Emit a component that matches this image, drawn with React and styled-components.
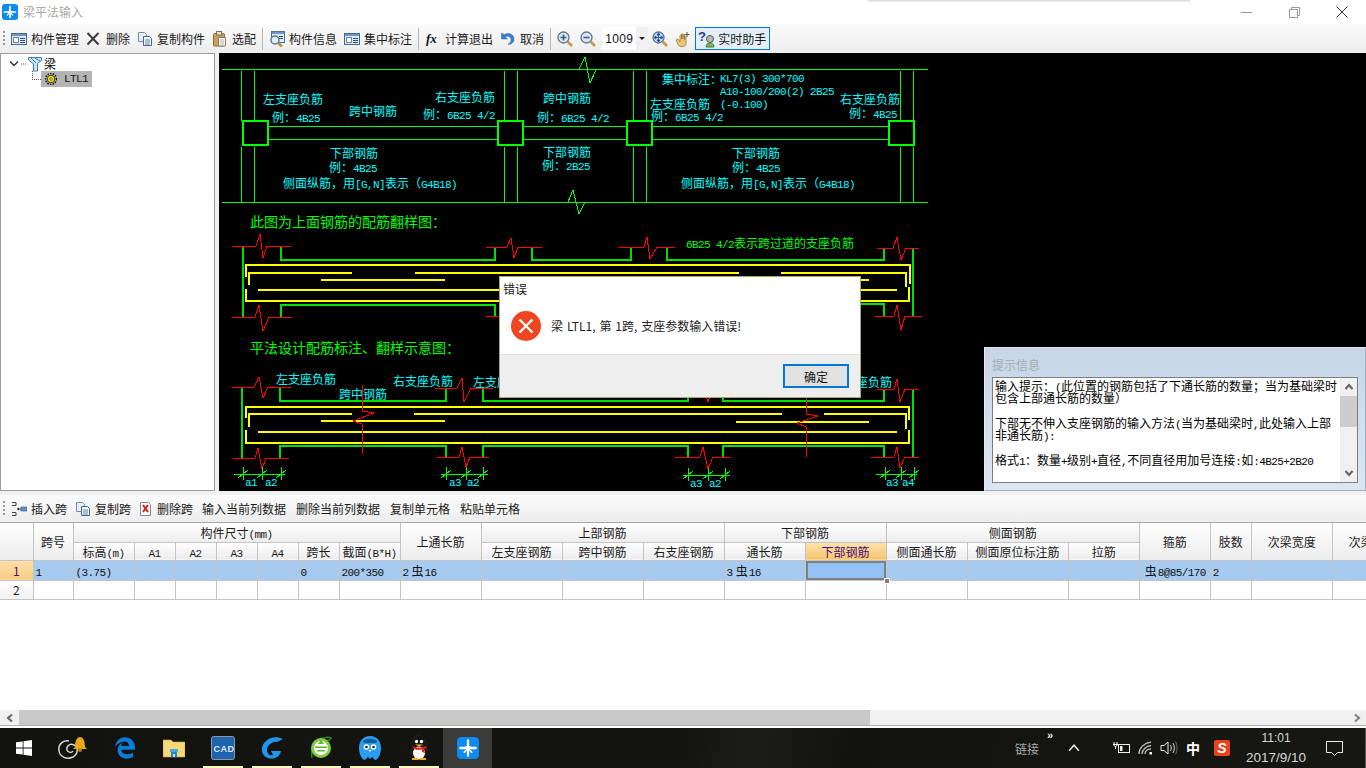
import React from 'react';
import styled, { createGlobalStyle } from 'styled-components';
import { FaEdgeLegacy } from 'react-icons/fa';

const uiFont = '"Noto Sans CJK SC", "Liberation Sans", sans-serif';
const monoFont = '"Liberation Mono", "Noto Sans CJK SC", monospace';

const GlobalStyle = createGlobalStyle`
  html, body { margin: 0; padding: 0; background: #fff; }
  body { font-family: ${uiFont}; font-size: 12px; color: #111; }
  * { box-sizing: border-box; }
`;

const Page = styled.div`
  position: relative;
  width: 1366px;
  height: 768px;
  overflow: hidden;
  display: flex;
  flex-direction: column;
  background: #fff;
`;

// ---------- title bar ----------
const TitleBar = styled.div`
  height: 24px;
  display: flex;
  align-items: center;
  padding-left: 2px;
  gap: 5px;
  background: #fff;
  color: #a9a9a9;
  line-height: 22px;
`;

const WindowControls = styled.div`
  margin-left: auto;
  display: flex;
`;

const WindowButton = styled.div`
  width: 48px;
  height: 22px;
  display: flex;
  align-items: center;
  justify-content: center;
`;

const TopShadow = styled.div`
  position: absolute;
  left: 868px;
  top: -4px;
  width: 322px;
  height: 5px;
  background: #ddd;
  box-shadow: 0 0 2px #bbb;
`;

// ---------- toolbars ----------
const Toolbar = styled.div`
  height: ${p => p.$h}px;
  display: flex;
  align-items: center;
  gap: ${p => p.$gap}px;
  padding-left: 3px;
  background: linear-gradient(#fbfbfb, #ededed);
  border-top: ${p => (p.$spaced ? '4px solid #f0f0f0' : 'none')};
  border-bottom: ${p => (p.$spaced ? '1px solid #a8a8a8' : 'none')};
  flex: none;
`;

const Grip = styled.div`
  width: 2px;
  height: 16px;
  margin-right: ${p => p.$mr}px;
  background: repeating-linear-gradient(#9a9a9a 0 2px, transparent 2px 4px);
`;

const Tool = styled.div`
  display: flex;
  align-items: center;
  gap: ${p => p.$gap ?? 4}px;
  padding: 0 ${p => p.$pad ?? 0}px;
  white-space: nowrap;
  color: #1a1a1a;
`;

const ToolSep = styled.div`
  width: 1px;
  height: 22px;
  margin: 0 -1px;
  background: #b8b8b8;
`;

const ZoomSelect = styled.div`
  width: 46px;
  height: 23px;
  margin: 0 -3px 0 -1px;
  display: flex;
  align-items: center;
  justify-content: space-between;
  background: #fff;
  padding-left: 3px;
  font-family: "Liberation Sans", sans-serif;
  font-size: 12px;
  letter-spacing: 0.4px;
`;

const SelectArrow = styled.div`
  width: 12px;
  height: 23px;
  background: #f0f0f0;
  display: flex;
  align-items: center;
  justify-content: center;
  &::after {
    content: '';
    border-top: 3px solid #222;
    border-left: 3px solid transparent;
    border-right: 3px solid transparent;
  }
`;

const HelperButton = styled(Tool)`
  width: 75px;
  height: 23px;
  margin-left: -3px;
  padding-left: 2px;
  gap: 2px;
  border: 1px solid #0078d7;
  background: #e4eff9;
`;

// ---------- middle ----------
const Middle = styled.div`
  height: 438px;
  display: flex;
  gap: 4px;
  background: #f0f0f0;
  flex: none;
`;

const TreePanel = styled.div`
  width: 215px;
  background: #fff;
  border: 1px solid #9c9c9c;
  padding: 2px 0 0 8px;
`;

const TreeRoot = styled.div`
  height: 15px;
  display: flex;
  align-items: center;
  gap: 2px;
  color: #000;
`;

const TreeLeaf = styled.div`
  display: flex;
  align-items: flex-start;
  padding-left: 23px;
`;

const TreeElbow = styled.div`
  width: 9px;
  height: 9px;
  border-left: 1px dotted #555;
  border-bottom: 1px dotted #555;
`;

const TreeSelected = styled.div`
  width: 51px;
  height: 16px;
  display: flex;
  align-items: center;
  gap: 7px;
  padding-left: 4px;
  background: #b4b4b4;
`;

const Canvas = styled.div`
  position: relative;
  flex: 1;
  background: #000;
`;

const Drawing = styled.svg`
  display: block;
`;

const Wire = styled.polyline`
  fill: none;
  stroke: ${p => p.$color};
  stroke-width: ${p => p.$w ?? 1};
  shape-rendering: crispEdges;
`;

const Column = styled.rect`
  fill: #000;
  stroke: #0f0;
  stroke-width: 2;
  shape-rendering: crispEdges;
`;

const Label = styled.text`
  fill: ${p => p.$color ?? '#0ff'};
  font-family: ${uiFont};
  font-size: ${p => p.$size ?? 12}px;
`;

const LabelLatin = styled.tspan`
  font-family: ${monoFont};
  font-size: 11px;
  letter-spacing: -0.6px;
`;

const Latin = styled.span`
  font-family: ${monoFont};
  font-size: 11px;
  letter-spacing: -0.6px;
`;

const SteelMark = styled.span`
  margin: 0 1px 0 3px;
`;

// ---------- hint panel ----------
const HintPanel = styled.div`
  position: absolute;
  right: 0;
  bottom: 0;
  width: 382px;
  height: 144px;
  display: flex;
  flex-direction: column;
  padding: 0 7px 7px 7px;
  background: linear-gradient(#c6d6e7, #dce6f1);
  border: 1px solid #9fb0c2;
  border-top-color: #dfe6ee;
  border-left-color: #e4ebf2;
`;

const HintTitle = styled.div`
  height: 29px;
  line-height: 34px;
  color: #a4abb3;
`;

const HintBox = styled.div`
  flex: 1;
  display: flex;
  background: #fff;
  border: 1px solid #7d7d7d;
`;

const HintText = styled.div`
  flex: 1;
  padding: 2px 0 0 2px;
  color: #000;
`;

const HintLine = styled.div`
  height: 12.3px;
  line-height: 12px;
  white-space: nowrap;
`;

const ScrollTrack = styled.div`
  width: 17px;
  display: flex;
  flex-direction: column;
  background: #f0f0f0;
`;

const ScrollStep = styled.div`
  height: ${p => p.$h}px;
  display: flex;
  align-items: center;
  justify-content: center;
  color: #606060;
`;

const ScrollThumb = styled.div`
  height: 31px;
  background: #cdcdcd;
`;

const ScrollGap = styled.div`
  flex: 1;
`;

// ---------- grid ----------
const GridArea = styled.div`
  flex: 1;
  overflow: hidden;
  background: #fff;
`;

const Table = styled.table`
  table-layout: fixed;
  border-collapse: collapse;
  width: 1413px;
  font-size: 12px;
`;

const Head = styled.th`
  height: ${p => p.$h ?? 19}px;
  padding: 0;
  font-weight: 400;
  text-align: center;
  white-space: nowrap;
  color: ${p => (p.$active ? '#4b0a7a' : '#1a1a1a')};
  background: ${p => (p.$active ? 'linear-gradient(#fde4ab, #f4c46e)' : 'linear-gradient(#fff, #ececec)')};
  border: 1px solid #c4c4c4;
  border-top: none;
  &:first-child { border-left: none; }
`;

const RowHead = styled.td`
  height: ${p => p.$h}px;
  padding: 0;
  text-align: center;
  color: ${p => (p.$active ? '#5a0a60' : '#222')};
  background: ${p => (p.$active ? 'linear-gradient(#fde0a8, #f7cb85)' : 'linear-gradient(#fff, #f1f1f1)')};
  border: 1px solid #c4c4c4;
  border-left: none;
`;

const Cell = styled.td`
  position: relative;
  z-index: ${p => (p.$current ? 1 : 0)};
  height: ${p => p.$h}px;
  padding: 0 2px;
  white-space: nowrap;
  color: #111;
  background: ${p => (p.$current ? '#92c2f6' : p.$selected ? '#a6caf0' : '#fff')};
  border: 1px solid #c4c4c4;
  border-left: ${p => (p.$frozen ? '1px solid #000' : '1px solid #c4c4c4')};
  box-shadow: ${p => (p.$current ? 'inset 0 0 0 2px #808080, 0 0 0 1px #808080' : 'none')};
`;

const FillHandle = styled.span`
  position: absolute;
  right: -4px;
  bottom: -4px;
  width: 6px;
  height: 6px;
  background: #808080;
  border: 1px solid #fff;
`;

const HScroll = styled.div`
  height: 15px;
  display: flex;
  background: #f0f0f0;
  flex: none;
`;

const HStep = styled.div`
  width: 19px;
  display: flex;
  align-items: center;
  justify-content: center;
`;

const HThumb = styled.div`
  width: 851px;
  background: #c9c9c9;
`;

const BottomEdge = styled.div`
  height: 3px;
  background: #fff;
  border-top: 1px solid #b0b0b0;
  flex: none;
`;

// ---------- dialog ----------
const Dialog = styled.div`
  position: absolute;
  left: 499px;
  top: 276px;
  width: 362px;
  height: 122px;
  display: flex;
  flex-direction: column;
  background: #fff;
  border: 1px solid #a9a96f;
`;

const DialogTitle = styled.div`
  height: 24px;
  line-height: 24px;
  padding-left: 3px;
  color: #222;
`;

const DialogBody = styled.div`
  flex: 1;
  display: flex;
  align-items: center;
  gap: 10px;
  padding: 0 0 4px 11px;
  color: #222;
  word-spacing: 1.2px;
`;

const DialogFoot = styled.div`
  height: 43px;
  display: flex;
  align-items: flex-start;
  justify-content: flex-end;
  padding: 9px 11px 0 0;
  background: #eeeeee;
  border-top: 1px solid #dfdfdf;
`;

const OkButton = styled.div`
  width: 66px;
  height: 24px;
  display: flex;
  align-items: center;
  justify-content: center;
  background: #e1e1e1;
  border: 2px solid #0078d7;
  color: #111;
`;

// ---------- taskbar ----------
const Taskbar = styled.div`
  height: 40px;
  display: flex;
  align-items: stretch;
  background: linear-gradient(100deg, #12120f 0%, #14140f 50%, #1c1c19 55%, #12120f 62%, #171714 100%);
  flex: none;
`;

const TaskTile = styled.div`
  position: relative;
  width: ${p => p.$w ?? 49}px;
  margin-left: ${p => p.$ml ?? 0}px;
  display: flex;
  align-items: center;
  justify-content: center;
  background: ${p => (p.$active ? '#3b3b39' : 'transparent')};
  &::after {
    content: '';
    display: ${p => (p.$running ? 'block' : 'none')};
    position: absolute;
    left: 5px;
    right: 4px;
    bottom: 0;
    height: 2px;
    background: #f7f7bd;
  }
`;

const Tray = styled.div`
  margin-left: auto;
  display: flex;
  align-items: stretch;
  color: #e8e8e8;
`;

const TrayItem = styled.div`
  position: relative;
  width: ${p => p.$w}px;
  display: flex;
  align-items: center;
  justify-content: center;
  border-right: ${p => (p.$divider ? '1px solid #555' : 'none')};
  padding-right: ${p => (p.$divider ? 3 : 0)}px;
`;

const LinkText = styled.span`
  color: #a8a8a8;
  font-size: 12px;
  margin-right: 18px;
`;

const LinkMore = styled.span`
  position: absolute;
  left: 37px;
  top: 1px;
  color: #eee;
  font-family: "Liberation Sans", sans-serif;
  font-size: 11px;
  font-weight: 700;
`;

const ImeChar = styled.span`
  font-size: 14px;
  font-weight: 700;
  color: #fff;
`;

const Clock = styled.div`
  text-align: center;
  font-family: "Liberation Sans", sans-serif;
  font-size: 12px;
  line-height: 19px;
  color: #d8d8d8;
`;

const ClockDate = styled.div`
  font-size: 13.5px;
`;

// ---------- helpers ----------
const split = s => s.split(/([\x20-\x7e]+)/).filter(Boolean);
const isLatin = s => /^[\x20-\x7e]+$/.test(s);

const Mixed = ({ text }) => split(text).map((part, i) => {
  if (isLatin(part)) return <Latin key={i}>{part}</Latin>;
  if (part === '虫') return <SteelMark key={i}>{part}</SteelMark>;
  return <React.Fragment key={i}>{part}</React.Fragment>;
});

const Cad = ({ x, y, color, size, text }) => (
  <Label x={x} y={y} $color={color} $size={size} xmlSpace="preserve">
    {split(text).map((part, i) =>
      isLatin(part) ? <LabelLatin key={i}>{part}</LabelLatin> : <tspan key={i}>{part}</tspan>
    )}
  </Label>
);

// ---------- toolbar icons ----------
const Svg = ({ children, w = 16, h = 16 }) => (
  <svg width={w} height={h} viewBox={`0 0 ${w} ${h}`} style={{ flex: 'none' }}>{children}</svg>
);

const PanelIcon = () => (
  <Svg>
    <rect x="0.5" y="2.5" width="15" height="11" fill="#dfe9f6" stroke="#44698f" />
    <rect x="1" y="3" width="14" height="2" fill="#6f97c4" />
    <rect x="2.5" y="6.5" width="5" height="5" fill="#fff" stroke="#6b86a3" />
    <path d="M9 7.5h5M9 9.5h5M9 11.5h5" stroke="#2f4f72" />
  </Svg>
);

const CrossIcon = () => (
  <Svg>
    <path d="M1.500 2L12.500 13.500M12.500 2L1.500 13.500" stroke="#3c3c3c" strokeWidth="2" />
  </Svg>
);

const CopyIcon = () => (
  <Svg>
    <path d="M1.5 1.5h6l2 2v7h-8z" fill="#e8f0fa" stroke="#6d8db5" />
    <path d="M6.5 5.5h6l2 2v7h-8z" fill="#f8fbff" stroke="#41659a" />
    <path d="M8 9h5M8 11h5M8 13h5" stroke="#5d82b5" />
  </Svg>
);

const ClipIcon = () => (
  <Svg>
    <rect x="1.5" y="2.5" width="11" height="12.5" rx="1" fill="#c9a25a" stroke="#8a6a30" />
    <rect x="4.5" y="0.5" width="5" height="3.5" fill="#e6e2d4" stroke="#77705e" />
    <path d="M6.5 6.5h7v8.5h-7z" fill="#fff" stroke="#857b66" />
    <path d="M8 9h4M8 11h4M8 13h4" stroke="#b5b0a0" />
  </Svg>
);

const InfoIcon = () => (
  <Svg>
    <rect x="2.5" y="0.5" width="13" height="11" fill="#e4edf8" stroke="#4b7099" />
    <rect x="3" y="1" width="12" height="2" fill="#6f97c4" />
    <path d="M10 5.5h4M10 7.5h4" stroke="#2f4f72" />
    <circle cx="6" cy="9" r="4" fill="#dff0fa" stroke="#55748f" strokeWidth="1.4" />
    <path d="M9 12l4 3.5" stroke="#b98b3c" strokeWidth="2.4" />
  </Svg>
);

const FxIcon = () => (
  <Svg>
    <text x="1" y="12" fontFamily="Liberation Serif, serif" fontStyle="italic" fontWeight="700" fontSize="13" fill="#111">fx</text>
  </Svg>
);

const UndoIcon = () => (
  <Svg>
    <path d="M1.5 2v6h6L5.3 5.8C7.5 4.6 10.5 5.5 11 8.5c.3 2-1 3.8-3 4.8 3.6.2 6-2 6-5.3C14 3.6 8.7 1 4.2 3.6z" fill="#3c7fd0" stroke="#2a62a8" strokeWidth=".5" />
  </Svg>
);

const Magnifier = ({ plus, arrows }) => (
  <Svg>
    <circle cx="6.5" cy="6.5" r="5.5" fill={arrows ? '#c5d8f2' : '#dde6f2'} stroke="#5c7391" strokeWidth="1.3" />
    <path d="M10.5 10.5l4.5 4.5" stroke="#c39a4a" strokeWidth="2.6" />
    {arrows
      ? <path d="M6.5 2.5v8M2.5 6.5h8M6.5 2l-1.5 2h3zM6.5 11l-1.5-2h3zM2 6.5l2-1.5v3zM11 6.5l-2-1.5v3z" stroke="#1f4f96" fill="#1f4f96" strokeWidth=".8" />
      : <path d={plus ? 'M3.5 6.5h6M6.5 3.5v6' : 'M3.5 6.5h6'} stroke="#3c5f8f" strokeWidth="1.6" />}
  </Svg>
);

const HandIcon = () => (
  <Svg>
    <path d="M1 9l2-1 2 3V4.5c0-1 1.500-1 1.500 0V8 3.500c0-1 1.500-1 1.500 0V8 4c0-1 1.500-1 1.500 0v4.500V6c0-1 1.500-1 1.500 0v6c0 2-1 3.500-3.500 3.500H6C3.500 15.500 3 13 1 9z" fill="#e7c678" stroke="#9a7b35" strokeWidth=".8" />
    <path d="M12 1v5M9.500 3.500h5" stroke="#555" strokeWidth="1" />
  </Svg>
);

const HelpIcon = () => (
  <svg width="18" height="18" viewBox="0 0 18 18" style={{ flex: 'none' }}>
    <text x="0" y="11" fontFamily="Liberation Sans, sans-serif" fontWeight="700" fontSize="13" fill="#1a3c8c">?</text>
    <circle cx="12" cy="9" r="3.500" fill="#b9b9b9" stroke="#555" />
    <path d="M8 17c0-3 2-4 4-4s4 1 4 4z" fill="#78b85a" stroke="#4c7c38" />
  </svg>
);

const InsertIcon = () => (
  <Svg>
    <path d="M1 1.500h4M5 1.500v3M1 4.500h4M1 11.500h4M5 11.500v3M1 14.500h4" stroke="#444" />
    <path d="M6 8h4" stroke="#333" /><path d="M6 8l2-1.500v3z" fill="#333" />
    <rect x="10" y="6" width="6" height="4" fill="#5d8fcb" stroke="#2e5a92" strokeWidth=".6" />
  </Svg>
);

const DeleteDocIcon = () => (
  <Svg>
    <path d="M1.500 1.500h8l2 2v11h-10z" fill="#fbfbfb" stroke="#7a8a9c" />
    <path d="M4 4l5 7M9 4l-5 7" stroke="#d2261c" strokeWidth="2" />
  </Svg>
);

const TreeChevron = () => (
  <svg width="10" height="8" viewBox="0 0 10 8" style={{ flex: 'none' }}>
    <path d="M1 1.500l4 4 4-4" fill="none" stroke="#333" strokeWidth="1.500" />
  </svg>
);

const BeamIcon = () => (
  <Svg w={14} h={16}>
    <path d="M0.500 1.500h13v3l-4 3v7.500h-4V8l-5-4z" fill="#cfe3f6" stroke="#3a7cc0" />
    <path d="M3 2l5 5M7 2l5 3" stroke="#3a7cc0" />
  </Svg>
);

const GearIcon = () => (
  <Svg w={12} h={12}>
    <circle cx="6" cy="6" r="5.500" fill="none" stroke="#111" strokeWidth="1.400" strokeDasharray="1.500 1.200" />
    <circle cx="6" cy="6" r="3.800" fill="#f2e600" stroke="#111" strokeWidth=".8" />
    <circle cx="6" cy="6" r="1.300" fill="#fff" stroke="#111" strokeWidth=".6" />
  </Svg>
);

const AppLogo = ({ size = 16 }) => (
  <svg width={size} height={size} viewBox="0 0 16 16" style={{ flex: 'none' }}>
    <rect width="16" height="16" rx="3" fill="#0d8bf2" />
    <path d="M8 2.500v11M2.500 8h3c1 0 1.500-1 2.500-1s1.500 1 2.500 1h3" fill="none" stroke="#fff" strokeWidth="1.700" strokeLinecap="round" />
    <path d="M5 11.500c1.500-2 1.500-2 3-3.500 1.500 1.500 1.500 1.500 3 3.500" fill="none" stroke="#fff" strokeWidth="1.200" />
  </svg>
);

// ---------- taskbar icons ----------
const WinLogo = () => (
  <svg width="16" height="16" viewBox="0 0 16 16">
    <path d="M0 2.300l6.700-.9v6.200H0zM7.500 1.300L16 0v7.600H7.500zM0 8.400h6.700v6.200L0 13.700zM7.500 8.400H16V16l-8.500-1.200z" fill="#fff" />
  </svg>
);

const SwirlBell = () => (
  <svg width="34" height="28" viewBox="0 0 34 28">
    <path d="M14 7C7 6 3 11 4 17c1 6 8 9 14 6 5-3 6-10 1-12-4-2-8 1-7 5 1 3 5 3 6 1" fill="none" stroke="#d5d5d5" strokeWidth="1.500" />
    <path d="M20 13c0-6 2-10 5-10s5 4 5 10l2 2H18z" fill="#e8a917" />
    <circle cx="25" cy="16" r="2" fill="#b97c10" />
  </svg>
);

const Folder = () => (
  <svg width="22" height="20" viewBox="0 0 22 20">
    <path d="M0 2h8l2 2h12v15H0z" fill="#f6d878" stroke="#c9a648" strokeWidth=".6" />
    <rect x="7" y="11" width="8" height="3" fill="#4aa8e6" />
    <rect x="8" y="14" width="6" height="5" fill="#1c86d8" />
    <rect x="10" y="16" width="2" height="3" fill="#bfe2f8" />
  </svg>
);

const CadLogo = () => (
  <svg width="24" height="24" viewBox="0 0 24 24">
    <rect x=".5" y=".5" width="23" height="23" rx="2" fill="#1c62ad" stroke="#8b98a6" />
    <text x="2.500" y="15.500" fontFamily="Liberation Sans, sans-serif" fontSize="9" fontWeight="700" letterSpacing=".5" fill="#dbe7f2">CAD</text>
  </svg>
);

const BlueG = () => (
  <svg width="26" height="24" viewBox="0 0 26 24">
    <path d="M24 3c-6-3-14-2-18 3C1 11 2 20 9 22c6 2 12-1 13-7H12l2 4c-3 1-6-1-6-5 0-5 6-9 10-8z" fill="#1f96ee" />
  </svg>
);

const GreenE = () => (
  <svg width="24" height="24" viewBox="0 0 24 24">
    <path d="M3 22C2 14 4 6 11 3c4-2 9-2 11-1-2 3-4 3-4 3" fill="none" stroke="#2d7f23" strokeWidth="1.500" />
    <circle cx="12" cy="12" r="10" fill="#7fcf3a" />
    <circle cx="12" cy="12" r="7" fill="#fff" />
    <path d="M6 10.500h12v1.500H6zM8 14h8v1.500H8z" fill="#5fb52c" />
    <path d="M12 4l3 4H9z" fill="#5fb52c" />
  </svg>
);

const BlueBird = () => (
  <svg width="24" height="26" viewBox="0 0 24 26">
    <path d="M12 1C5 1 1 6 1 13c0 6 3 12 6 12l3-3 2 2 2-2 3 3c3 0 6-6 6-12C23 6 19 1 12 1z" fill="#2a9df0" />
    <path d="M5 6c3-3 11-3 14 0l-1 2H6z" fill="#155c9a" />
    <circle cx="8.500" cy="12" r="2.800" fill="#fff" /><circle cx="15.500" cy="12" r="2.800" fill="#fff" />
    <circle cx="8.500" cy="12" r="1.300" fill="#223" /><circle cx="15.500" cy="12" r="1.300" fill="#223" />
    <path d="M10.500 15h3l-1.500 2z" fill="#fff" />
  </svg>
);

const QQ = () => (
  <svg width="20" height="26" viewBox="0 0 20 26">
    <ellipse cx="10" cy="9" rx="7" ry="8.500" fill="#141414" stroke="#333" strokeWidth=".5" />
    <ellipse cx="10" cy="17" rx="8" ry="8" fill="#141414" stroke="#333" strokeWidth=".5" />
    <ellipse cx="10" cy="18" rx="6" ry="6.500" fill="#fff" />
    <circle cx="7.500" cy="6.500" r="1.700" fill="#fff" /><circle cx="12.500" cy="6.500" r="1.700" fill="#fff" />
    <path d="M3 11c4 2 10 2 14 0l1 2-3 1 1 4-3-1v-2.500c-3 .6-5 .5-8-.5z" fill="#e0211b" />
    <path d="M6 9.500h8l-4 2z" fill="#f2b81c" />
    <path d="M3 23h6v2H3zM11 23h6v2h-6z" fill="#f2a81c" />
  </svg>
);

const Chevron = ({ dir = 'left', color = '#606060', size = 10, weight = 2 }) => {
  const d = {
    left: 'M7 1.500L3 5l4 3.500',
    right: 'M3 1.500L7 5 3 8.500',
    up: 'M1.500 7L5 3l3.500 4',
    down: 'M1.500 3L5 7l3.500-4',
  }[dir];
  return (
    <svg width={size} height={size} viewBox="0 0 10 10">
      <path d={d} fill="none" stroke={color} strokeWidth={weight} />
    </svg>
  );
};

const BatteryIcon = () => (
  <svg width="18" height="14" viewBox="0 0 18 14">
    <rect x="5.500" y="3.500" width="11" height="8" fill="none" stroke="#eee" />
    <rect x="7" y="5" width="2.500" height="5" fill="#eee" />
    <path d="M0 3.500h5M1 1v2.500M4 1v2.500M2.500 8V5.500C1.500 5.500 1 5 1 3.500M2.500 5.500C3.500 5.500 4 5 4 3.500" stroke="#fff" fill="none" />
  </svg>
);

const WifiIcon = () => (
  <svg width="16" height="14" viewBox="0 0 16 14">
    <path d="M1 13C1 7 6 2 13 1M4 13c0-4 4-8 9-8.500M7 13c0-2.500 2-5 6-5" fill="none" stroke="#bcbcbc" strokeWidth="1.300" />
    <rect x="11.500" y="11" width="2.500" height="2.500" fill="#fff" />
  </svg>
);

const VolumeIcon = () => (
  <svg width="18" height="16" viewBox="0 0 18 16">
    <path d="M1 5.500h3L8 2v12l-4-3.500H1z" fill="none" stroke="#eee" />
    <path d="M10.500 5c1 2 1 4 0 6M13 3c1.800 3 1.800 7 0 10" fill="none" stroke="#ddd" />
    <path d="M15.500 1.500c2 4 2 9 0 13" fill="none" stroke="#666" />
  </svg>
);

const SogouIcon = () => (
  <svg width="16" height="16" viewBox="0 0 16 16">
    <rect width="16" height="16" rx="2" fill="#e8431a" />
    <text x="8" y="13" textAnchor="middle" fontFamily="Liberation Sans, sans-serif" fontWeight="700" fontStyle="italic" fontSize="14" fill="#fff">S</text>
  </svg>
);

const NoticeIcon = () => (
  <svg width="17" height="17" viewBox="0 0 17 17">
    <path d="M.5 1.500h16v11h-5L8.500 15.500l-3-3h-5z" fill="none" stroke="#eee" />
  </svg>
);

// ---------- drawing data ----------
const thinGreen = [
  '222,69.500 928,69.500', '222,202.500 928,202.500',
  '241.500,71 241.500,121', '241.500,147 241.500,202', '254.500,71 254.500,121', '254.500,147 254.500,202',
  '504.500,71 504.500,121', '504.500,147 504.500,202', '517.500,71 517.500,121', '517.500,147 517.500,202',
  '633.500,71 633.500,121', '633.500,147 633.500,202', '646.500,71 646.500,121', '646.500,147 646.500,202',
  '900.500,71 900.500,121', '900.500,147 900.500,202', '913.500,71 913.500,121', '913.500,147 913.500,202',
  '267,126.500 497,126.500', '267,139.500 497,139.500',
  '522,126.500 626,126.500', '522,139.500 626,139.500',
  '651,126.500 888,126.500', '651,139.500 888,139.500',
  '579,69 585,57 590,83 596,70', '568,202 573,190 579,214 585,202',
];

const columns = [[242.500, 121], [497.500, 121], [626.500, 121], [888.500, 121]];

const thickGreen = [
  '243,246 243,317', '281,246 281,260 495,260 495,247', '532,247 532,260 631,260 631,247',
  '667,248 667,260 884,260 884,248', '913,248 913,316',
  '281,317 281,305 495,305 495,316', '532,316 532,305 631,305 631,316', '667,316 667,304 884,304 884,316',
  '242,387 242,458', '280,387 280,401 446,401 446,388', '483,388 483,401 688,401 688,389',
  '723,389 723,401 884,401 884,389', '913,389 913,457',
  '280,458 280,446 446,446 446,457', '483,457 483,446 688,446 688,457', '723,457 723,446 884,446 884,457',
];

const yellow = [
  '246,277 246,264.500 910,264.500 910,284', '249,285 249,272.500 352,272.500', '415,272.500 739,272.500',
  '781,272.500 906,272.500 906,287', '321,279.500 445,279.500', '736,279.500 869,279.500',
  '258,289.500 897,289.500', '246,289 246,300.500 909,300.500 909,287',
  '246,418 246,406.500 909,406.500 909,420', '249,427 249,413.500 352,413.500', '414,413.500 782,413.500',
  '824,413.500 906,413.500 906,429', '321,420.500 445,420.500', '736,421.500 869,421.500',
  '258,431.500 897,431.500', '246,430 246,442.500 909,442.500 909,430',
];

const red = [
  '232,246 256,246 260,234 263,258 267,246 291,246',
  '486,247 507,247 511,238 514,258 518,247 542,247',
  '619,247 644,247 647,237 650,259 657,247 675,247',
  '877,248 893,248 897,237 901,260 906,248 919,248',
  '232,317 255,317 259,305 263,331 269,317 292,317',
  '486,316 507,316 511,306 514,328 518,316 542,316',
  '875,316 894,316 897,305 901,330 905,316 922,316',
  '232,387 254,387 259,377 263,398 268,387 291,387',
  '435,388 457,388 462,378 464,402 471,388 493,388',
  '672,388 695,388 700,378 708,402 712,388 731,388',
  '877,389 894,389 897,379 900,402 905,389 919,389',
  '233,458 255,458 258,448 262,469 266,458 289,458',
  '437,457 459,457 462,447 466,467 470,457 489,457',
  '675,457 700,457 703,447 708,469 713,457 731,457',
  '871,457 894,457 897,447 900,468 905,457 919,457',
  '362,385 362,411 374,413 353,421 362,424 362,454',
  '806,385 806,414 818,416 797,423 806,427 806,457',
];

const dims = [
  { from: 234, to: 285, y: 474, ticks: [243, 262, 281] },
  { from: 441, to: 488, y: 474, ticks: [446, 466, 483] },
  { from: 683, to: 730, y: 475, ticks: [688, 708, 725] },
  { from: 876, to: 917, y: 474, ticks: [885, 901, 914] },
];

const cyanLabels = [
  [263, 104, '左支座负筋'], [272, 122, '例：4B25'], [349, 116, '跨中钢筋'],
  [435, 102, '右支座负筋'], [423, 119, '例：6B25 4/2'], [543, 103, '跨中钢筋'], [537, 122, '例：6B25 4/2'],
  [330, 158, '下部钢筋'], [329, 172, '例：4B25'], [283, 188, '侧面纵筋，用[G,N]表示（G4B18)'],
  [543, 157, '下部钢筋'], [542, 170, '例：2B25'],
  [662, 84, '集中标注：'], [720, 82, 'KL7(3) 300*700'], [720, 95, 'A10-100/200(2) 2B25'],
  [650, 109, '左支座负筋'], [720, 108, '(-0.100)'], [651, 121, '例：6B25 4/2'],
  [840, 104, '右支座负筋'], [849, 118, '例：4B25'],
  [732, 158, '下部钢筋'], [732, 172, '例：4B25'], [681, 188, '侧面纵筋，用[G,N]表示（G4B18)'],
  [276, 384, '左支座负筋'], [339, 399, '跨中钢筋'], [393, 386, '右支座负筋'], [473, 387, '左支座负筋'], [832, 387, '右支座负筋'],
  [245, 486, 'a1'], [265, 486, 'a2'], [449, 486, 'a3'], [467, 486, 'a2'],
  [690, 487, 'a3'], [709, 487, 'a2'], [886, 486, 'a3'], [902, 486, 'a4'],
];

const CadDrawing = () => (
  <Drawing width="1147" height="438" viewBox="219 53 1147 438">
    {thinGreen.map((p, i) => <Wire key={i} points={p} $color="#00ff00" />)}
    {columns.map(([x, y]) => <Column key={x} x={x} y={y} width="25" height="24" />)}
    {thickGreen.map((p, i) => <Wire key={i} points={p} $color="#00e000" $w={2} />)}
    {yellow.map((p, i) => <Wire key={i} points={p} $color="#ffff00" $w={2} />)}
    {red.map((p, i) => <Wire key={i} points={p} $color="#ff0000" />)}
    {dims.map(d => (
      <g key={d.from}>
        <Wire points={`${d.from},${d.y} ${d.to},${d.y}`} $color="#00ff00" />
        {d.ticks.map(t => (
          <g key={t}>
            <Wire points={`${t},${d.y - 7} ${t},${d.y + 6}`} $color="#00ff00" />
            <Wire points={`${t - 5},${d.y + 4} ${t + 5},${d.y - 4}`} $color="#00ff00" />
          </g>
        ))}
      </g>
    ))}
    {cyanLabels.map(([x, y, t], i) => <Cad key={i} x={x} y={y} text={t} />)}
    <Cad x={250} y={227} size={14} color="#00ff00" text="此图为上面钢筋的配筋翻样图：" />
    <Cad x={250} y={353} size={14} color="#00ff00" text="平法设计配筋标注、翻样示意图：" />
    <Cad x={686} y={248} color="#00ff00" text="6B25 4/2表示跨过道的支座负筋" />
  </Drawing>
);

// ---------- grid data ----------
const colWidths = [33, 40, 61, 41, 41, 41, 41, 41, 61, 81, 81, 81, 81, 81, 81, 81, 101, 71, 71, 41, 81, 81];
const row1 = ['1', '(3.75)', '', '', '', '', '0', '200*350', '2虫16', '', '', '', '3虫16', '', '', '', '', '虫8@85/170', '2', '', ''];
const hints = [
  '输入提示：(此位置的钢筋包括了下通长筋的数量；当为基础梁时',
  '包含上部通长筋的数量）',
  '',
  '下部无不伸入支座钢筋的输入方法(当为基础梁时,此处输入上部',
  '非通长筋):',
  '',
  '格式1：数量+级别+直径,不同直径用加号连接:如:4B25+2B20',
];

const subHeads = ['标高(m)', 'A1', 'A2', 'A3', 'A4', '跨长', '截面(B*H)'];
const topHeads = ['左支座钢筋', '跨中钢筋', '右支座钢筋'];
const sideHeads = ['侧面通长筋', '侧面原位标注筋', '拉筋'];

const DataGrid = () => (
  <GridArea>
    <Table>
      <colgroup>
        {colWidths.map((w, i) => <col key={i} width={w} style={{ width: w }} />)}
      </colgroup>
      <thead>
        <tr>
          <Head rowSpan={2} />
          <Head rowSpan={2}>跨号</Head>
          <Head colSpan={7}><Mixed text="构件尺寸(mm)" /></Head>
          <Head rowSpan={2}>上通长筋</Head>
          <Head colSpan={3}>上部钢筋</Head>
          <Head colSpan={2}>下部钢筋</Head>
          <Head colSpan={3}>侧面钢筋</Head>
          <Head rowSpan={2}>箍筋</Head>
          <Head rowSpan={2}>肢数</Head>
          <Head rowSpan={2}>次梁宽度</Head>
          <Head rowSpan={2}>次梁加筋</Head>
        </tr>
        <tr>
          {subHeads.map(h => <Head key={h} $h={18}><Mixed text={h} /></Head>)}
          {topHeads.map(h => <Head key={h} $h={18}>{h}</Head>)}
          <Head $h={18}>通长筋</Head>
          <Head $h={18} $active>下部钢筋</Head>
          {sideHeads.map(h => <Head key={h} $h={18}>{h}</Head>)}
        </tr>
      </thead>
      <tbody>
        <tr>
          <RowHead $h={20} $active>1</RowHead>
          {row1.map((v, i) => (
            <Cell key={i} $h={20} $selected $frozen={i === 1} $current={i === 13}>
              <Mixed text={v} />
              {i === 13 && <FillHandle />}
            </Cell>
          ))}
        </tr>
        <tr>
          <RowHead $h={19}>2</RowHead>
          {row1.map((_, i) => <Cell key={i} $h={19} $frozen={i === 1} />)}
        </tr>
      </tbody>
    </Table>
  </GridArea>
);

export default function App() {
  return (
    <Page>
      <GlobalStyle />
      <TopShadow />

      <TitleBar>
        <AppLogo />
        <span>梁平法输入</span>
        <WindowControls>
          <WindowButton>
            <svg width="11" height="11" viewBox="0 0 11 11"><path d="M0 5.500h11" stroke="#999" /></svg>
          </WindowButton>
          <WindowButton>
            <svg width="11" height="11" viewBox="0 0 11 11"><path d="M.5 2.500h8v8h-8zM2.500 2.500v-2h8v8h-2" fill="none" stroke="#999" /></svg>
          </WindowButton>
          <WindowButton>
            <svg width="12" height="12" viewBox="0 0 12 12"><path d="M.5.500l11 11M11.500.500l-11 11" stroke="#333" /></svg>
          </WindowButton>
        </WindowControls>
      </TitleBar>

      <Toolbar $h={29} $gap={7}>
        <Grip $mr={-1} />
        <Tool><PanelIcon />构件管理</Tool>
        <Tool><CrossIcon />删除</Tool>
        <Tool><CopyIcon />复制构件</Tool>
        <Tool><ClipIcon />选配</Tool>
        <ToolSep />
        <Tool><InfoIcon />构件信息</Tool>
        <Tool><PanelIcon />集中标注</Tool>
        <ToolSep />
        <Tool><FxIcon />计算退出</Tool>
        <Tool><UndoIcon />取消</Tool>
        <ToolSep />
        <Magnifier plus />
        <Magnifier />
        <ZoomSelect>1009<SelectArrow /></ZoomSelect>
        <Magnifier arrows />
        <HandIcon />
        <HelperButton><HelpIcon />实时助手</HelperButton>
      </Toolbar>

      <Middle>
        <TreePanel>
          <TreeRoot>
            <TreeChevron />
            <Svg w={5} h={2}><path d="M0 1h5" stroke="#555" strokeDasharray="1 1" /></Svg>
            <BeamIcon />
            <span>梁</span>
          </TreeRoot>
          <TreeLeaf>
            <TreeElbow />
            <TreeSelected><GearIcon /><Mixed text="LTL1" /></TreeSelected>
          </TreeLeaf>
        </TreePanel>
        <Canvas>
          <CadDrawing />
          <HintPanel>
            <HintTitle>提示信息</HintTitle>
            <HintBox>
              <HintText>
                {hints.map((h, i) => <HintLine key={i}><Mixed text={h} /></HintLine>)}
              </HintText>
              <ScrollTrack>
                <ScrollStep $h={18}><Chevron dir="up" /></ScrollStep>
                <ScrollThumb />
                <ScrollGap />
                <ScrollStep $h={18}><Chevron dir="down" /></ScrollStep>
              </ScrollTrack>
            </HintBox>
          </HintPanel>
        </Canvas>
      </Middle>

      <Toolbar $h={32} $gap={8} $spaced>
        <Grip $mr={-2} />
        <Tool><InsertIcon />插入跨</Tool>
        <Tool><CopyIcon />复制跨</Tool>
        <Tool $gap={2}><DeleteDocIcon />删除跨</Tool>
        <Tool $pad={1}>输入当前列数据</Tool>
        <Tool $pad={1}>删除当前列数据</Tool>
        <Tool $pad={1}>复制单元格</Tool>
        <Tool $pad={1}>粘贴单元格</Tool>
      </Toolbar>

      <DataGrid />

      <HScroll>
        <HStep><Chevron dir="left" /></HStep>
        <HThumb />
        <ScrollGap />
        <HStep><Chevron dir="right" color="#808080" /></HStep>
      </HScroll>
      <BottomEdge />

      <Taskbar>
        <TaskTile $w={48}><WinLogo /></TaskTile>
        <TaskTile $w={48}><SwirlBell /></TaskTile>
        <TaskTile $ml={4}><FaEdgeLegacy size={22} color="#0c7bd8" /></TaskTile>
        <TaskTile><Folder /></TaskTile>
        <TaskTile $running><CadLogo /></TaskTile>
        <TaskTile $running><BlueG /></TaskTile>
        <TaskTile $running><GreenE /></TaskTile>
        <TaskTile $running><BlueBird /></TaskTile>
        <TaskTile $running><QQ /></TaskTile>
        <TaskTile $active><AppLogo size={22} /></TaskTile>
        <Tray>
          <TrayItem $w={52}><LinkText>链接</LinkText><LinkMore>»</LinkMore></TrayItem>
          <TrayItem $w={24}><Chevron dir="up" color="#e8e8e8" size={14} weight={1.1} /></TrayItem>
          <TrayItem $w={24} />
          <TrayItem $w={24}><BatteryIcon /></TrayItem>
          <TrayItem $w={24}><WifiIcon /></TrayItem>
          <TrayItem $w={22}><VolumeIcon /></TrayItem>
          <TrayItem $w={26}><ImeChar>中</ImeChar></TrayItem>
          <TrayItem $w={32}><SogouIcon /></TrayItem>
          <TrayItem $w={76}><Clock>11:01<ClockDate>2017/9/10</ClockDate></Clock></TrayItem>
          <TrayItem $w={40}><NoticeIcon /></TrayItem>
          <TrayItem $w={12} $divider />
        </Tray>
      </Taskbar>

      <Dialog>
        <DialogTitle>错误</DialogTitle>
        <DialogBody>
          <svg width="30" height="30" viewBox="0 0 30 30" style={{ flex: 'none' }}>
            <circle cx="15" cy="15" r="15" fill="#ef4520" />
            <path d="M8.500 8.500l13 13M21.500 8.500l-13 13" stroke="#fff" strokeWidth="2.400" />
          </svg>
          <span>梁 LTL1, 第 1跨, 支座参数输入错误!</span>
        </DialogBody>
        <DialogFoot><OkButton>确定</OkButton></DialogFoot>
      </Dialog>
    </Page>
  );
}
